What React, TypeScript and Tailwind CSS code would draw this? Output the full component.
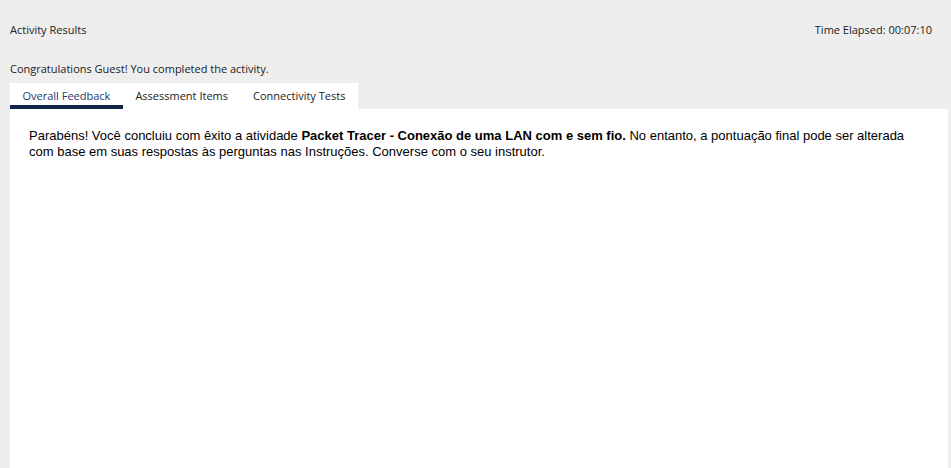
export default function App() {
  const os = { fontFamily: '"Open Sans", "Noto Sans", sans-serif' };
  return (
    <div className="w-[951px] h-[468px] bg-[#eeeeee] flex flex-col overflow-hidden" style={os}>
      <div className="flex justify-between items-center h-[60px] pl-[10px] pr-[19px] text-[11px] text-[#222]">
        <span>Activity Results</span>
        <span>Time Elapsed: 00:07:10</span>
      </div>
      <div className="pl-[10px] h-[23px] flex items-start text-[11px] text-[#222] pt-[1px]">
        Congratulations Guest! You completed the activity.
      </div>
      <div className="flex flex-col flex-1 ml-[10px] mr-[3px]">
        <div className="flex self-start bg-white h-[26px] text-[11px]">
          <div className="px-[12.5px] flex items-center border-b-4 border-[#0f2548] text-[#1e3a66] pt-[4px]">Overall Feedback</div>
          <div className="px-[12.5px] flex items-center text-[#222]">Assessment Items</div>
          <div className="px-[12.5px] flex items-center text-[#222]">Connectivity Tests</div>
        </div>
        <div className="flex-1 bg-white pl-[19px] pr-[20px] pt-[19px] text-[13px] leading-[16px] text-black" style={{ fontFamily: '"Liberation Sans", Arial, sans-serif' }}>
          Parabéns! Você concluiu com êxito a atividade <b>Packet Tracer - Conexão de uma LAN com e sem fio.</b> No entanto, a pontuação final pode ser alterada com base em suas respostas às perguntas nas Instruções. Converse com o seu instrutor.
        </div>
      </div>
    </div>
  );
}
